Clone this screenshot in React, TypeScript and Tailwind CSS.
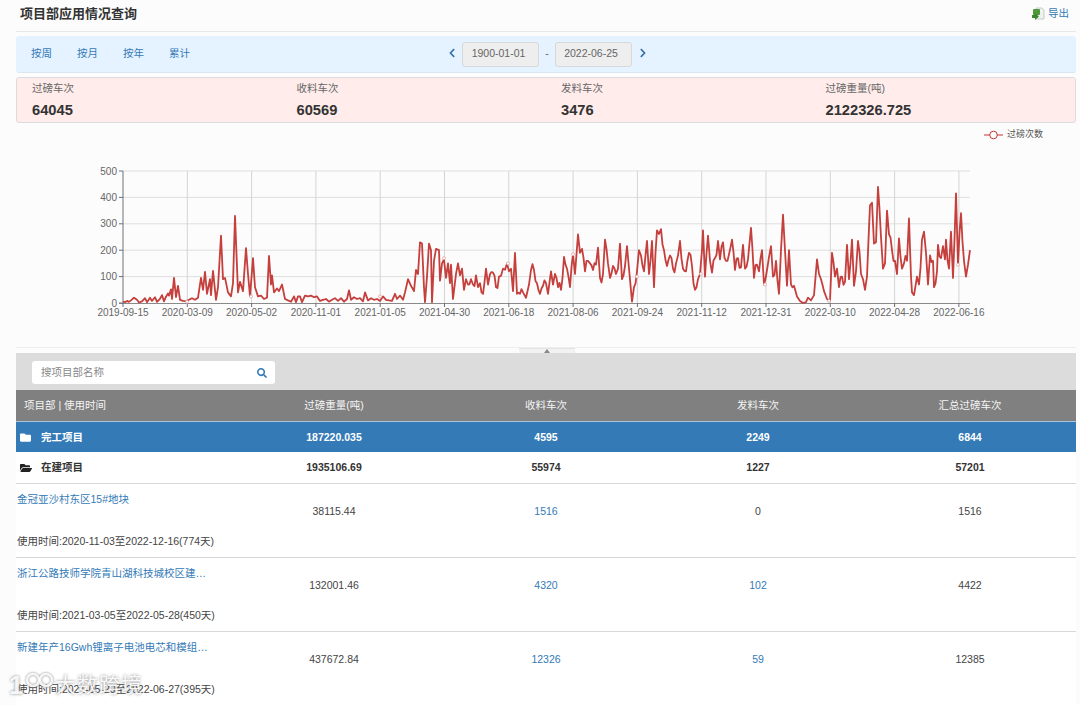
import React from 'react';
import { FaChevronLeft, FaChevronRight, FaFolder, FaFolderOpen, FaSearch } from 'react-icons/fa';

const FONT = "font-['Liberation_Sans','Noto_Sans_CJK_SC',sans-serif]";

// x position, value
const SERIES: [number, number][] = [
  [123, 5], [125, 3], [127, 8], [129, 4], [131, 10], [134, 20], [137, 12], [139, 2], [142, 6], [145, 18], [147, 3], [150, 20], [152, 8], [155, 22],
  [157, 4], [160, 16], [162, 30], [164, 6], [166, 24], [168, 36], [169, 28], [171, 52], [172, 15], [174, 95], [176, 22], [178, 65], [180, 12],
  [183, 8], [186, 6], [189, 12], [192, 18], [195, 12], [198, 20], [201, 95], [203, 50], [205, 118], [207, 35], [210, 90], [211, 30], [213, 122],
  [216, 12], [218, 60], [221, 255], [223, 90], [225, 95], [228, 40], [231, 25], [233, 75], [235, 330], [238, 40], [240, 80], [243, 45], [246, 208],
  [248, 110], [250, 25], [253, 170], [255, 60], [258, 25], [261, 28], [264, 15], [267, 20], [269, 178], [271, 70], [272, 105], [274, 40], [277, 55],
  [279, 45], [282, 70], [285, 15], [288, 10], [291, 5], [294, 25], [296, 3], [298, 25], [300, 25], [302, 3], [305, 28], [308, 25], [311, 28],
  [314, 22], [317, 25], [320, 8], [323, 12], [326, 15], [329, 5], [332, 12], [335, 18], [338, 8], [341, 18], [344, 5], [347, 15], [349, 48], [351, 12],
  [354, 22], [357, 15], [360, 18], [363, 6], [365, 40], [368, 10], [371, 18], [374, 12], [377, 15], [380, 8], [383, 25], [386, 12], [389, 10],
  [392, 8], [395, 35], [397, 15], [400, 28], [403, 12], [405, 40], [408, 90], [411, 65], [414, 45], [416, 125], [418, 110], [420, 230], [422, 225],
  [424, 60], [425, 3], [427, 100], [429, 225], [431, 200], [432, 3], [434, 160], [436, 205], [439, 200], [440, 85], [442, 150], [444, 165],
  [446, 95], [448, 150], [450, 75], [451, 145], [453, 15], [456, 110], [458, 150], [460, 105], [462, 130], [464, 50], [466, 90], [468, 70], [471, 90],
  [473, 70], [476, 105], [478, 60], [480, 75], [483, 35], [486, 130], [488, 70], [490, 110], [493, 115], [496, 60], [499, 100], [503, 130], [507, 150],
  [509, 120], [511, 130], [513, 45], [515, 190], [517, 35], [520, 35], [523, 40], [526, 20], [529, 70], [531, 125], [534, 125], [537, 75], [540, 35],
  [543, 65], [546, 75], [548, 35], [551, 120], [553, 70], [555, 110], [558, 60], [561, 50], [564, 175], [567, 130], [570, 60], [573, 185], [575, 110],
  [578, 260], [580, 190], [582, 205], [585, 120], [588, 160], [590, 150], [593, 125], [596, 145], [598, 210], [600, 95], [603, 110], [605, 240],
  [608, 150], [610, 95], [613, 140], [616, 110], [618, 130], [620, 225], [622, 90], [625, 140], [627, 215], [629, 130], [632, 5], [634, 60], [637, 120],
  [639, 200], [641, 180], [644, 120], [647, 235], [649, 110], [652, 235], [654, 60], [657, 275], [661, 280], [664, 200], [667, 140], [670, 180],
  [673, 130], [676, 150], [680, 235], [683, 130], [686, 120], [689, 190], [692, 140], [695, 50], [698, 90], [700, 110], [702, 200], [703, 275],
  [705, 100], [708, 255], [710, 160], [712, 115], [715, 170], [718, 235], [720, 165], [723, 230], [726, 160], [729, 185], [732, 240], [735, 125],
  [738, 170], [741, 135], [743, 220], [745, 130], [748, 165], [751, 285], [754, 95], [757, 145], [759, 120], [762, 200], [764, 70], [767, 125],
  [771, 215], [773, 100], [776, 160], [779, 35], [781, 200], [783, 335], [785, 200], [787, 65], [789, 200], [791, 70], [794, 65], [797, 25], [800, 8],
  [803, 0], [806, 3], [808, 20], [811, 10], [814, 30], [817, 165], [819, 110], [821, 90], [824, 45], [827, 15], [830, 8], [832, 190], [835, 100],
  [837, 130], [839, 60], [842, 100], [845, 80], [847, 220], [849, 90], [852, 240], [854, 65], [856, 120], [858, 235], [861, 110], [863, 90], [865, 50],
  [867, 100], [870, 370], [872, 380], [874, 225], [876, 230], [878, 440], [881, 250], [883, 130], [885, 150], [887, 350], [889, 260], [892, 200],
  [895, 160], [897, 110], [899, 245], [902, 130], [904, 150], [907, 160], [909, 320], [911, 100], [912, 40], [914, 30], [917, 100], [919, 70],
  [922, 240], [924, 270], [926, 190], [928, 70], [930, 180], [933, 160], [934, 60], [937, 120], [938, 220], [941, 170], [943, 215], [945, 165],
  [946, 240], [949, 130], [951, 270], [953, 95], [956, 415], [958, 145], [961, 340], [964, 160], [966, 100], [968, 145], [970, 200],
];

const X_LABELS = ['2019-09-15', '2020-03-09', '2020-05-02', '2020-11-01', '2021-01-05', '2021-04-30', '2021-06-18', '2021-08-06', '2021-09-24', '2021-11-12', '2021-12-31', '2022-03-10', '2022-04-28', '2022-06-16'];
const TICK_GAP = 64.3;
const yOf = (v: number) => 303 - (v * 132) / 500;

const densify = (series: [number, number][]) => {
  const out: [number, number][] = [];
  series.forEach(([x, v], i) => {
    out.push([x, v]);
    const next = series[i + 1];
    if (next && x > 440 && next[0] - x >= 3 && Math.min(v, next[1]) > 30) {
      out.push([(x + next[0]) / 2, (v + next[1]) / 2 + ((x * 37) % 50) - 25]);
    }
  });
  return out;
};

const Chart = () => {
  const points = densify(SERIES).map(([x, v]) => `${x},${yOf(v).toFixed(1)}`).join(' ');
  return (
    <svg width="1060" height="170" viewBox="16 160 1060 170" className="block">
      {[100, 200, 300, 400, 500].map((v) => (
        <line key={v} x1="123" x2="970" y1={yOf(v)} y2={yOf(v)} stroke="#dedede" strokeWidth="1" />
      ))}
      {X_LABELS.map((_, i) =>
        i === 0 ? null : (
          <line key={i} x1={123 + i * TICK_GAP} x2={123 + i * TICK_GAP} y1="171" y2="303" stroke="#d4d4d6" strokeWidth="1" />
        ),
      )}
      <line x1="123" x2="123" y1="171" y2="303" stroke="#6e7079" strokeWidth="1" />
      <line x1="119" x2="970" y1="303.5" y2="303.5" stroke="#8a8a8a" strokeWidth="1.2" />
      {[0, 100, 200, 300, 400, 500].map((v) => (
        <g key={v}>
          <line x1="119" x2="123" y1={yOf(v)} y2={yOf(v)} stroke="#6e7079" />
          <text x="117" y={yOf(v) + 3.5} textAnchor="end" fontSize="10" fill="#666">{v}</text>
        </g>
      ))}
      {X_LABELS.map((label, i) => (
        <g key={label}>
          <line x1={123 + i * TICK_GAP} x2={123 + i * TICK_GAP} y1="303" y2="307" stroke="#6e7079" />
          <text x={123 + i * TICK_GAP} y="316" textAnchor="middle" fontSize="10" fill="#666">{label}</text>
        </g>
      ))}
      <polyline points={points} fill="none" stroke="#c23531" strokeWidth="1.8" strokeLinejoin="round" strokeOpacity="0.95" />
      {[[187, 5], [251, 25], [380, 25], [444, 170], [508, 150], [573, 185], [637, 100], [701, 110], [765, 70], [829, 8], [958, 145]].map(([x, v]) => (
        <circle key={x} cx={x} cy={yOf(v)} r="1.5" fill="#fff" stroke="#e3a3a1" strokeWidth="0.8" />
      ))}
    </svg>
  );
};

const ExportIcon = () => (
  <svg width="14" height="14" viewBox="0 0 14 14">
    <path d="M5 1h6l2 2v9H5z" fill="#eef2ee" stroke="#b9c4bb" strokeWidth="0.8" />
    <rect x="2" y="2" width="7" height="6" rx="1" fill="#4f9a3a" />
    <path d="M1 8h3V6l4 3.5L4 13v-2H1z" fill="#3a8a2c" />
  </svg>
);

const Stat = ({ label, value }: { label: string; value: string }) => (
  <div className="pl-[15px] pt-[3px]">
    <div className="text-[10.5px] leading-[14px] text-[#666]">{label}</div>
    <div className="mt-[6px] text-[14.7px] leading-[18px] font-bold text-[#333]">{value}</div>
  </div>
);

const Project = ({ name, time, weight, recv, send, total, sendLink }: { name: string; time: string; weight: string; recv: string; send: string; total: string; sendLink?: boolean }) => (
  <div className="grid grid-cols-5 h-[74px] border-b border-[#d8d8d8] bg-white text-[10.5px] text-[#444]">
    <div className="flex flex-col justify-between pl-[1px] pt-[8px] pb-[9px] whitespace-nowrap">
      <span className="text-[#337ab7] leading-[14px]">{name}</span>
      <span className="leading-[14px]">{time}</span>
    </div>
    <div className="text-center pt-[20px] leading-[14px]">{weight}</div>
    <div className="text-center pt-[20px] leading-[14px] text-[#337ab7]">{recv}</div>
    <div className={`text-center pt-[20px] leading-[14px] ${sendLink ? 'text-[#337ab7]' : ''}`}>{send}</div>
    <div className="text-center pt-[20px] leading-[14px]">{total}</div>
  </div>
);

export default function App() {
  return (
    <div className={`${FONT} relative h-[705px] w-[1080px] overflow-hidden bg-[#fcfcfc]`}>
      {/* title */}
      <div className="ml-[16px] mr-[4px] flex h-[32px] items-center justify-between border-b border-[#e8e8e8] pb-[4px] pl-[4px]">
        <h1 className="text-[13px] font-bold text-[#333]">项目部应用情况查询</h1>
        <a className="flex items-center gap-[3px] pr-[7px] text-[10.5px] text-[#337ab7]">
          <ExportIcon />
          导出
        </a>
      </div>

      {/* period switch and dates */}
      <div className="ml-[16px] mr-[4px] mt-[4px] relative flex h-[37px] items-center rounded-[3px] border-b border-[#dde6ee] bg-[#e5f2ff] pl-[15px] text-[10.5px] text-[#337ab7]">
        <span className="w-[46px]">按周</span>
        <span className="w-[46px]">按月</span>
        <span className="w-[46px]">按年</span>
        <span>累计</span>
        <div className="ml-[257px] flex items-center text-[#666]">
          <FaChevronLeft className="mb-[3px] mr-[5px] text-[10px] text-[#2f6fa8]" />
          <span className="flex h-[25px] w-[77px] items-center justify-center rounded-[3px] border border-[#d8d8d8] bg-[#eeeeee] pr-[4px]">1900-01-01</span>
          <span className="w-[16px] text-center">-</span>
          <span className="flex h-[25px] w-[77px] items-center justify-center rounded-[3px] border border-[#d8d8d8] bg-[#eeeeee] pr-[5px]">2022-06-25</span>
          <FaChevronRight className="mb-[3px] ml-[6px] text-[10px] text-[#2f6fa8]" />
        </div>
      </div>

      {/* totals */}
      <div className="ml-[16px] mr-[4px] mt-[4px] grid h-[46px] grid-cols-4 rounded-[3px] border border-[#dcdcdc] bg-[#ffeceb]">
        <Stat label="过磅车次" value="64045" />
        <Stat label="收料车次" value="60569" />
        <Stat label="发料车次" value="3476" />
        <Stat label="过磅重量(吨)" value="2122326.725" />
      </div>

      {/* chart */}
      <div className="ml-[16px] mr-[4px] h-[225px] border-b border-[#eeeeee]">
        <div className="flex h-[37px] items-center justify-end gap-[4px] pr-[33px] pb-[14px] text-[9px] text-[#555]">
          <svg width="19" height="10" viewBox="0 0 19 10">
            <line x1="0" x2="19" y1="5" y2="5" stroke="#c23531" strokeWidth="1" />
            <circle cx="9.5" cy="5" r="3.8" fill="#fff" stroke="#c23531" strokeWidth="1" />
          </svg>
          过磅次数
        </div>
        <Chart />
      </div>

      {/* drag handle */}
      <div className="relative ml-[16px] mr-[4px] mt-[5px] h-[37px] bg-[#dcdcdc] pl-[16px] pt-[8px]">
        <div className="absolute left-[503px] top-[-5px] flex h-[5px] w-[56px] items-end justify-center border-t border-[#e4e4e4] bg-[#f2f2f2]">
          <div className="h-0 w-0 border-x-[3px] border-b-[4px] border-x-transparent border-b-[#888]" />
        </div>
        <div className="flex h-[23px] w-[243px] items-center justify-between rounded-[3px] bg-white pl-[9px] pr-[8px] text-[10.5px] text-[#888]">
          搜项目部名称
          <FaSearch className="text-[10px] text-[#337ab7]" />
        </div>
      </div>

      {/* table */}
      <div className="ml-[16px] mr-[4px]">
        <div className="grid h-[31px] grid-cols-5 items-center bg-[#808080] text-center text-[10.5px] text-[#f5f5f5]">
          <div className="pl-[8px] text-left">项目部 | 使用时间</div>
          <div>过磅重量(吨)</div>
          <div>收料车次</div>
          <div>发料车次</div>
          <div>汇总过磅车次</div>
        </div>
        <div className="grid h-[31px] grid-cols-5 items-center border-t border-[#a9c4dc] bg-[#337ab7] pt-[1px] text-center text-[10.5px] font-bold text-white">
          <div className="flex items-center gap-[10px] pl-[4px] text-left">
            <FaFolder className="text-[11px]" />
            完工项目
          </div>
          <div>187220.035</div>
          <div>4595</div>
          <div>2249</div>
          <div>6844</div>
        </div>
        <div className="grid h-[32px] grid-cols-5 items-center border-b border-[#d8d8d8] bg-white pt-[1px] text-center text-[10.5px] font-bold text-[#333]">
          <div className="flex items-center gap-[9px] pl-[4px] text-left">
            <FaFolderOpen className="text-[12px] text-[#222]" />
            在建项目
          </div>
          <div>1935106.69</div>
          <div>55974</div>
          <div>1227</div>
          <div>57201</div>
        </div>
        <Project name="金冠亚沙村东区15#地块" time="使用时间:2020-11-03至2022-12-16(774天)" weight="38115.44" recv="1516" send="0" total="1516" />
        <Project name="浙江公路技师学院青山湖科技城校区建…" time="使用时间:2021-03-05至2022-05-28(450天)" weight="132001.46" recv="4320" send="102" total="4422" sendLink />
        <Project name="新建年产16Gwh锂离子电池电芯和模组…" time="使用时间:2021-05-29至2022-06-27(395天)" weight="437672.84" recv="12326" send="59" total="12385" sendLink />
      </div>

      {/* image watermark */}
      <div className="absolute left-[9px] top-[669px] flex items-center text-[26px] leading-[30px] font-bold text-white/90 [text-shadow:0_0_3px_rgba(90,90,90,0.75)]">
        <span className="w-[15px]">1</span>
        <svg width="36" height="26" viewBox="0 0 36 26" className="mb-[6px] drop-shadow-[0_0_1px_rgba(90,90,90,0.8)]">
          <circle cx="9" cy="11" r="6" fill="none" stroke="#fff" strokeOpacity="0.9" strokeWidth="2.5" />
          <circle cx="22" cy="11" r="6" fill="none" stroke="#fff" strokeOpacity="0.9" strokeWidth="2.5" />
        </svg>
        <span className="ml-[-5px] text-[21px] font-normal tracking-[1px]">大数跨境</span>
      </div>
    </div>
  );
}
